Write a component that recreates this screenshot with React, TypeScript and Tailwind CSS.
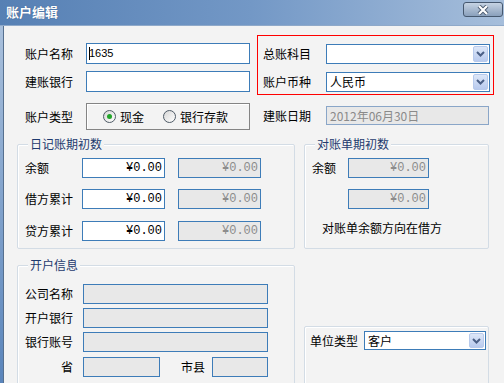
import React from "react";

const Label = ({ children, w }: { children: React.ReactNode; w: string }) => (
  <div className={`${w} shrink-0 text-[12px] leading-[14px] text-black`}>{children}</div>
);

const Chevron = () => (
  <svg width="9" height="6" viewBox="0 0 9 6">
    <path d="M1 1 L4.5 4.5 L8 1" fill="none" stroke="#4a5f86" strokeWidth="2" />
  </svg>
);

const Combo = ({ text, w, h }: { text?: string; w: string; h: string }) => (
  <div className={`${w} ${h} flex items-center border border-[#3d7cb8] bg-white`}>
    <span className="flex-1 pl-[3px] text-[12px] leading-[14px] text-black">{text}</span>
    <div className="mr-[1px] flex h-[calc(100%-2px)] w-[15px] items-center justify-center rounded-[2px] border border-[#b7caec] bg-gradient-to-b from-[#dde7f8] to-[#b8caee]">
      <Chevron />
    </div>
  </div>
);

const Amount = ({ gray }: { gray?: boolean }) => (
  <div
    className={`flex h-[20px] w-[83px] items-center justify-end border border-[#3d7cb8] pr-[2px] font-['Liberation_Mono',monospace] text-[12px] leading-[14px] ${
      gray ? "bg-[#e8e8e8] text-[#8c8c8c]" : "bg-white text-black"
    }`}
  >
    ¥0.00
  </div>
);

const GrayBox = ({ w }: { w: string }) => (
  <div className={`${w} h-[20px] border border-[#3d7cb8] bg-[#e8e8e8]`} />
);

const Group = ({
  title,
  w,
  h,
  className,
  children,
}: {
  title?: string;
  w: string;
  h: string;
  className?: string;
  children?: React.ReactNode;
}) => (
  <div
    className={`relative ${w} ${h} shrink-0 rounded-[2px] border border-[#d3dce5] shadow-[inset_1px_1px_0_#ffffff] ${className ?? ""}`}
  >
    {title && (
      <span className="absolute left-[10px] top-[-8px] bg-[#f3f3f3] px-[2px] text-[12px] leading-[14px] text-[#1e3a6e]">
        {title}
      </span>
    )}
    {children}
  </div>
);

const Radio = ({ checked }: { checked?: boolean }) => (
  <div className="flex h-[13px] w-[13px] shrink-0 items-center justify-center rounded-full border border-[#4e5a66] bg-gradient-to-br from-[#d6d6d6] to-white">
    {checked && <div className="h-[5px] w-[5px] rounded-full bg-[#22a52a]" />}
  </div>
);

export default function App() {
  return (
    <div className="flex h-[383px] w-[504px] flex-col overflow-hidden bg-[#f3f3f3] font-['Noto_Sans_CJK_SC','Liberation_Sans',sans-serif]">
      {/* Title bar */}
      <div className="flex h-[26px] shrink-0 items-start bg-gradient-to-r from-[#5680b4] via-[#7398c6] to-[#a6bedb] border-b border-[#8fa9c9]">
        <span className="ml-[6px] mt-[4px] text-[13px] font-bold leading-[16px] text-white [text-shadow:0_0_1px_#2a4a78]">
          账户编辑
        </span>
        <div className="ml-auto mr-[1px] mt-[2px] flex h-[15px] w-[40px] items-center justify-center rounded-[3px] border border-[#46586f] bg-gradient-to-b from-[#c6d3e3] to-[#8aa0bc]">
          <svg width="14" height="10" viewBox="0 0 14 10">
            <path d="M3 1 L11 9 M11 1 L3 9" stroke="#4a5a70" strokeWidth="4" />
            <path d="M3 1 L11 9 M11 1 L3 9" stroke="#ffffff" strokeWidth="2.2" />
          </svg>
        </div>
      </div>

      <div className="flex min-h-0 flex-1">
        <div className="w-[4px] shrink-0 border-r border-[#56708f] bg-gradient-to-b from-[#a9c0dc] to-[#5a85bb]" />
        <div className="flex flex-1 flex-col">
          {/* Top section */}
          <div className="flex items-start">
            <div className="ml-[21px] flex flex-col pt-[17px]">
              <div className="flex items-center">
                <Label w="w-[61px]">账户名称</Label>
                <div className="flex h-[21px] w-[164px] items-center border border-[#3d7cb8] bg-white pl-[2px] font-['Liberation_Sans',sans-serif] text-[11px] text-black">
                  <span className="mr-[-1px] h-[13px] w-[1px] bg-black" />
                  1635
                </div>
              </div>
              <div className="mt-[7px] flex items-center">
                <Label w="w-[61px]">建账银行</Label>
                <div className="h-[21px] w-[164px] border border-[#3d7cb8] bg-white" />
              </div>
              <div className="mt-[11px] flex items-center">
                <Label w="w-[61px]">账户类型</Label>
                <div className="flex h-[27px] w-[164px] items-center border border-[#848484] pl-[16px] shadow-[inset_1px_1px_0_#ffffff]">
                  <Radio checked />
                  <span className="ml-[4px] text-[12px] leading-[14px]">现金</span>
                  <span className="ml-[19px]" />
                  <Radio />
                  <span className="ml-[4px] text-[12px] leading-[14px]">银行存款</span>
                </div>
              </div>
            </div>

            <div className="ml-[7px] flex flex-col pt-[9px]">
              <div className="h-[60px] w-[237px] border border-[#ff0000] pl-[5px] pt-[8px]">
                <div className="flex items-center">
                  <Label w="w-[63px]">总账科目</Label>
                  <Combo w="w-[164px]" h="h-[20px]" />
                </div>
                <div className="mt-[8px] flex items-center">
                  <Label w="w-[63px]">账户币种</Label>
                  <Combo w="w-[164px]" h="h-[20px]" text="人民币" />
                </div>
              </div>
              <div className="mt-[11px] flex items-center pl-[6px]">
                <Label w="w-[63px]">建账日期</Label>
                <div className="flex h-[19px] w-[163px] items-center border border-[#8aa6c8] bg-[#e8e8e8] pl-[3px] text-[12px] leading-[14px] text-[#8a8a8a]">
                  2012年06月30日
                </div>
              </div>
            </div>
          </div>

          {/* Opening balances */}
          <div className="ml-[13px] mt-[14px] flex items-start">
            <Group title="日记账期初数" w="w-[278px]" h="h-[105px]">
              <div className="flex flex-col pl-[7px] pt-[13px]">
                <div className="flex items-center">
                  <Label w="w-[57px]">余额</Label>
                  <Amount />
                  <div className="ml-[13px]">
                    <Amount gray />
                  </div>
                </div>
                <div className="mt-[11px] flex items-center">
                  <Label w="w-[57px]">借方累计</Label>
                  <Amount />
                  <div className="ml-[13px]">
                    <Amount gray />
                  </div>
                </div>
                <div className="mt-[12px] flex items-center">
                  <Label w="w-[57px]">贷方累计</Label>
                  <Amount />
                  <div className="ml-[13px]">
                    <Amount gray />
                  </div>
                </div>
              </div>
            </Group>

            <Group title="对账单期初数" w="w-[185px]" h="h-[105px]" className="ml-[9px]">
              <div className="flex flex-col pl-[7px] pt-[13px]">
                <div className="flex items-center">
                  <Label w="w-[36px]">余额</Label>
                  <div className="[&>div]:w-[81px]">
                    <Amount gray />
                  </div>
                </div>
                <div className="mt-[11px] flex items-center pl-[36px]">
                  <div className="[&>div]:w-[81px]">
                    <Amount gray />
                  </div>
                </div>
                <div className="ml-[10px] mt-[9px] flex h-[20px] items-center text-[12px] leading-[14px] text-black">
                  对账单余额方向在借方
                </div>
              </div>
            </Group>
          </div>

          {/* Bank info */}
          <div className="ml-[13px] mt-[16px] flex items-start">
            <Group title="开户信息" w="w-[278px]" h="h-[140px]">
              <div className="flex flex-col pl-[7px] pt-[18px]">
                <div className="flex items-center">
                  <Label w="w-[58px]">公司名称</Label>
                  <GrayBox w="w-[185px]" />
                </div>
                <div className="mt-[4px] flex items-center">
                  <Label w="w-[58px]">开户银行</Label>
                  <GrayBox w="w-[185px]" />
                </div>
                <div className="mt-[4px] flex items-center">
                  <Label w="w-[58px]">银行账号</Label>
                  <GrayBox w="w-[185px]" />
                </div>
                <div className="mt-[5px] flex items-center">
                  <div className="w-[58px] shrink-0 pr-[10px] text-right text-[12px] leading-[14px]">省</div>
                  <GrayBox w="w-[77px]" />
                  <div className="w-[52px] shrink-0 pr-[7px] text-right text-[12px] leading-[14px]">市县</div>
                  <GrayBox w="w-[56px]" />
                </div>
              </div>
            </Group>

            <Group w="w-[185px]" h="h-[80px]" className="ml-[9px] mt-[61px]">
              <div className="flex items-center pl-[5px] pt-[4px]">
                <Label w="w-[54px]">单位类型</Label>
                <Combo w="w-[122px]" h="h-[19px]" text="客户" />
              </div>
            </Group>
          </div>
        </div>
      </div>
    </div>
  );
}
